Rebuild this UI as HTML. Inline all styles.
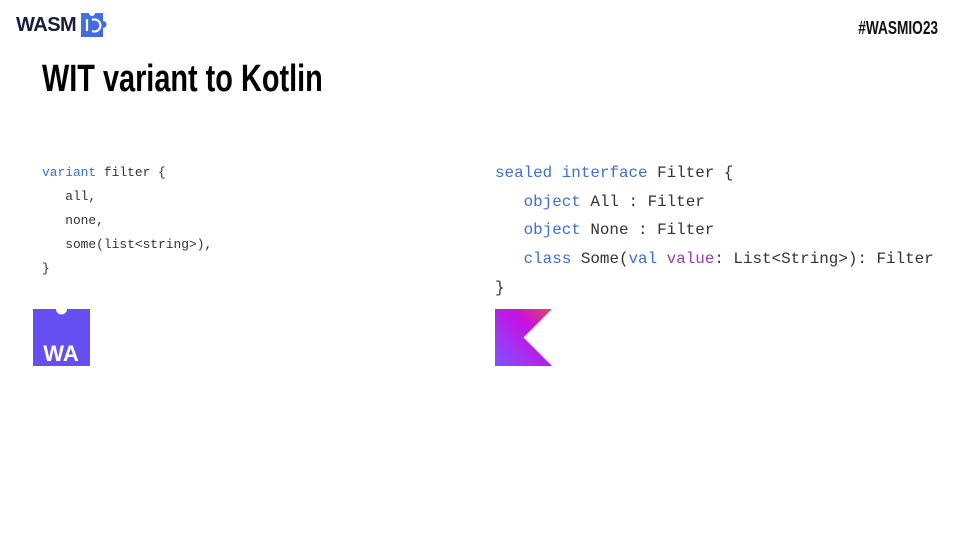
<!DOCTYPE html>
<html><head><meta charset="utf-8"><style>
body{margin:0;width:960px;height:540px;background:#fff;position:relative;overflow:hidden;font-family:"Liberation Sans",sans-serif}
.abs{position:absolute;white-space:pre}
.title{left:42px;top:58px;font-size:38px;font-weight:bold;color:#000;transform:scaleX(0.76);transform-origin:left top}
.tag{right:22px;top:18px;font-size:18px;font-weight:bold;color:#111;transform:scaleX(0.76);transform-origin:right top}
.code{font-family:"Liberation Mono","Courier New",monospace;color:#333}
.l{left:42px;font-size:12.9px;line-height:24px}
.r{left:495px;font-size:15.9px;line-height:28.7px}
.k{color:#3d6fd6}.p{color:#9a3ab0}
</style></head><body>
<div class="abs" style="left:16px;top:14px;font-size:20px;font-weight:bold;color:#1a1d3a;letter-spacing:-0.5px">WASM</div>
<svg class="abs" style="left:81px;top:13px" width="30" height="25" viewBox="0 0 30 25">
<defs><linearGradient id="g" x1="0" y1="0" x2="1" y2="1"><stop offset="0" stop-color="#3c7be0"/><stop offset="1" stop-color="#4a5fe0"/></linearGradient></defs>
<path d="M0 0H8a3 3 0 0 0 6 0H22V8a3 3 0 0 1 0 7V24H0Z" fill="url(#g)"/>
<path d="M6 6V18M11 7a6 6 0 1 1 0 11" stroke="#fff" stroke-width="2.2" fill="none"/>
</svg>
<div class="abs title">WIT variant to Kotlin</div>
<div class="abs tag">#WASMIO23</div>
<div class="abs code l" style="top:161px"><span class="k">variant</span> filter {
   all,
   none,
   some(list&lt;string&gt;),
}</div>
<div class="abs code r" style="top:159px"><span class="k">sealed</span> <span class="k">interface</span> Filter {
   <span class="k">object</span> All : Filter
   <span class="k">object</span> None : Filter
   <span class="k">class</span> Some(<span class="k">val</span> <span class="p">value</span>: List&lt;String&gt;): Filter
}</div>
<svg class="abs" style="left:33px;top:309px" width="57" height="57" viewBox="0 0 57 57">
<path d="M0 0H23a5.5 5.5 0 0 0 11 0H57V57H0Z" fill="#654ff0"/>
<text x="28" y="52" font-family="Liberation Sans" font-weight="bold" font-size="22" fill="#fff" text-anchor="middle">WA</text>
</svg>
<svg class="abs" style="left:495px;top:309px" width="57" height="57" viewBox="0 0 57 57">
<defs><linearGradient id="kg" x1="1" y1="0" x2="0" y2="1"><stop offset="0" stop-color="#e44857"/><stop offset="0.35" stop-color="#c711e1"/><stop offset="1" stop-color="#7f52ff"/></linearGradient></defs>
<path d="M0 0H57L28.5 28.5L57 57H0Z" fill="url(#kg)"/>
</svg>
</body></html>
